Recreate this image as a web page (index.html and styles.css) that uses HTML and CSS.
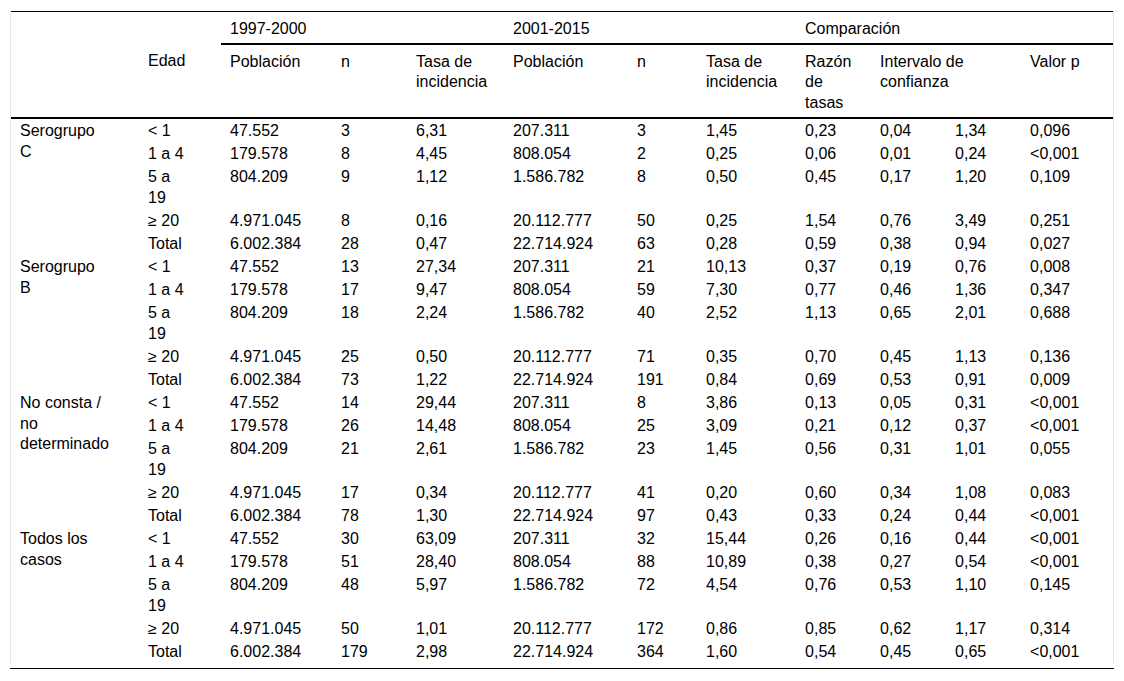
FILE: index.html
```html
<!DOCTYPE html>
<html lang="es">
<head>
<meta charset="utf-8">
<title>Tabla</title>
<link rel="stylesheet" href="styles.css">
</head>
<body>
<div class="wrap">
<table class="data">
<colgroup>
<col class="c-grp"><col class="c-age"><col class="c-pop1"><col class="c-n1"><col class="c-rate1"><col class="c-pop2"><col class="c-n2"><col class="c-rate2"><col class="c-ratio"><col class="c-lo"><col class="c-hi"><col class="c-p">
</colgroup>
<thead>
<tr class="h1">
<th colspan="2" class="blank"></th>
<th colspan="3" class="grp">1997-2000</th>
<th colspan="3" class="grp">2001-2015</th>
<th colspan="4" class="grp">Comparación</th>
</tr>
<tr class="h2">
<th></th>
<th class="age">Edad</th>
<th>Población</th>
<th>n</th>
<th>Tasa de incidencia</th>
<th>Población</th>
<th>n</th>
<th>Tasa de incidencia</th>
<th class="ratio">Razón de tasas</th>
<th colspan="2">Intervalo de confianza</th>
<th>Valor p</th>
</tr>
</thead>
<tbody>
<tr><td rowspan="5" class="grpname">Serogrupo C</td><td class="age">&lt; 1</td><td>47.552</td><td>3</td><td>6,31</td><td>207.311</td><td>3</td><td>1,45</td><td>0,23</td><td>0,04</td><td>1,34</td><td>0,096</td></tr>
<tr><td class="age">1 a 4</td><td>179.578</td><td>8</td><td>4,45</td><td>808.054</td><td>2</td><td>0,25</td><td>0,06</td><td>0,01</td><td>0,24</td><td>&lt;0,001</td></tr>
<tr><td class="age">5 a 19</td><td>804.209</td><td>9</td><td>1,12</td><td>1.586.782</td><td>8</td><td>0,50</td><td>0,45</td><td>0,17</td><td>1,20</td><td>0,109</td></tr>
<tr><td class="age">≥ 20</td><td>4.971.045</td><td>8</td><td>0,16</td><td>20.112.777</td><td>50</td><td>0,25</td><td>1,54</td><td>0,76</td><td>3,49</td><td>0,251</td></tr>
<tr><td class="age">Total</td><td>6.002.384</td><td>28</td><td>0,47</td><td>22.714.924</td><td>63</td><td>0,28</td><td>0,59</td><td>0,38</td><td>0,94</td><td>0,027</td></tr>

<tr><td rowspan="5" class="grpname">Serogrupo B</td><td class="age">&lt; 1</td><td>47.552</td><td>13</td><td>27,34</td><td>207.311</td><td>21</td><td>10,13</td><td>0,37</td><td>0,19</td><td>0,76</td><td>0,008</td></tr>
<tr><td class="age">1 a 4</td><td>179.578</td><td>17</td><td>9,47</td><td>808.054</td><td>59</td><td>7,30</td><td>0,77</td><td>0,46</td><td>1,36</td><td>0,347</td></tr>
<tr><td class="age">5 a 19</td><td>804.209</td><td>18</td><td>2,24</td><td>1.586.782</td><td>40</td><td>2,52</td><td>1,13</td><td>0,65</td><td>2,01</td><td>0,688</td></tr>
<tr><td class="age">≥ 20</td><td>4.971.045</td><td>25</td><td>0,50</td><td>20.112.777</td><td>71</td><td>0,35</td><td>0,70</td><td>0,45</td><td>1,13</td><td>0,136</td></tr>
<tr><td class="age">Total</td><td>6.002.384</td><td>73</td><td>1,22</td><td>22.714.924</td><td>191</td><td>0,84</td><td>0,69</td><td>0,53</td><td>0,91</td><td>0,009</td></tr>

<tr><td rowspan="5" class="grpname">No consta / no determinado</td><td class="age">&lt; 1</td><td>47.552</td><td>14</td><td>29,44</td><td>207.311</td><td>8</td><td>3,86</td><td>0,13</td><td>0,05</td><td>0,31</td><td>&lt;0,001</td></tr>
<tr><td class="age">1 a 4</td><td>179.578</td><td>26</td><td>14,48</td><td>808.054</td><td>25</td><td>3,09</td><td>0,21</td><td>0,12</td><td>0,37</td><td>&lt;0,001</td></tr>
<tr><td class="age">5 a 19</td><td>804.209</td><td>21</td><td>2,61</td><td>1.586.782</td><td>23</td><td>1,45</td><td>0,56</td><td>0,31</td><td>1,01</td><td>0,055</td></tr>
<tr><td class="age">≥ 20</td><td>4.971.045</td><td>17</td><td>0,34</td><td>20.112.777</td><td>41</td><td>0,20</td><td>0,60</td><td>0,34</td><td>1,08</td><td>0,083</td></tr>
<tr><td class="age">Total</td><td>6.002.384</td><td>78</td><td>1,30</td><td>22.714.924</td><td>97</td><td>0,43</td><td>0,33</td><td>0,24</td><td>0,44</td><td>&lt;0,001</td></tr>

<tr><td rowspan="5" class="grpname">Todos los casos</td><td class="age">&lt; 1</td><td>47.552</td><td>30</td><td>63,09</td><td>207.311</td><td>32</td><td>15,44</td><td>0,26</td><td>0,16</td><td>0,44</td><td>&lt;0,001</td></tr>
<tr><td class="age">1 a 4</td><td>179.578</td><td>51</td><td>28,40</td><td>808.054</td><td>88</td><td>10,89</td><td>0,38</td><td>0,27</td><td>0,54</td><td>&lt;0,001</td></tr>
<tr><td class="age">5 a 19</td><td>804.209</td><td>48</td><td>5,97</td><td>1.586.782</td><td>72</td><td>4,54</td><td>0,76</td><td>0,53</td><td>1,10</td><td>0,145</td></tr>
<tr><td class="age">≥ 20</td><td>4.971.045</td><td>50</td><td>1,01</td><td>20.112.777</td><td>172</td><td>0,86</td><td>0,85</td><td>0,62</td><td>1,17</td><td>0,314</td></tr>
<tr><td class="age">Total</td><td>6.002.384</td><td>179</td><td>2,98</td><td>22.714.924</td><td>364</td><td>1,60</td><td>0,54</td><td>0,45</td><td>0,65</td><td>&lt;0,001</td></tr>
</tbody>
</table>
</div>
<div class="foot-rule"></div>
</body>
</html>
```
FILE: styles.css
```css
html, body {
  margin: 0;
  padding: 0;
  background: #ffffff;
}

body {
  font-family: "Liberation Sans", Arial, Helvetica, sans-serif;
  font-size: 16px;
  color: #000000;
}

.wrap {
  margin: 11px 0 0 10px;
  width: 1102px;
  border-left: 1px solid #e6e6e6;
  border-right: 1px solid #e6e6e6;
}

.data {
  width: 1102px;
  table-layout: fixed;
  border-collapse: collapse;
  border-top: 1px solid #000000;
  line-height: 20.5px;
}

.c-grp { width: 128px; }
.c-age { width: 82px; }
.c-pop1 { width: 111px; }
.c-n1 { width: 75px; }
.c-rate1 { width: 97px; }
.c-pop2 { width: 124px; }
.c-n2 { width: 69px; }
.c-rate2 { width: 99px; }
.c-ratio { width: 75px; }
.c-lo { width: 75px; }
.c-hi { width: 75px; }
.c-p { width: 92px; }

.data th {
  font-weight: normal;
  text-align: left;
  vertical-align: top;
  padding: 6.5px 12px 4px 9px;
}

.h1 .grp {
  border-bottom: 2px solid #000000;
}

.h2 th {
  border-bottom: 2px solid #000000;
}

.data td {
  text-align: left;
  vertical-align: top;
  padding: 2.3px 12px 0.3px 9px;
}

.data td.grpname {
  padding-right: 30px;
}

.data .age {
  padding-right: 34px;
}

.foot-rule {
  margin: 5px 0 0 10px;
  width: 1104px;
  border-top: 1px solid #000000;
}
```
